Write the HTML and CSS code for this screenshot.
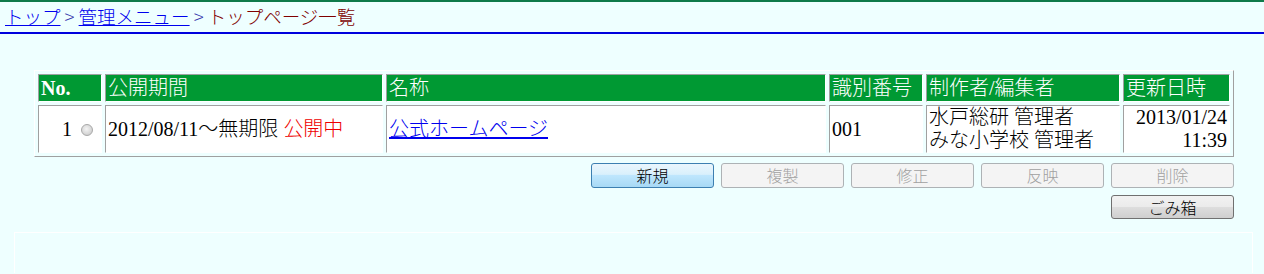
FILE: index.html
```html
<!DOCTYPE html>
<html lang="ja">
<head>
  <meta charset="utf-8">
  <title>トップページ一覧</title>
  <link rel="stylesheet" href="styles.css">
</head>
<body>

  <div class="topbar"></div>

  <div class="crumbs">
    <a href="#">トップ</a><span class="sep"> &gt; </span><a href="#">管理メニュー</a><span class="sep"> &gt; </span><span class="current">トップページ一覧</span>
  </div>

  <div class="main">
    <table class="list">
      <colgroup>
        <col class="c-no">
        <col class="c-period">
        <col class="c-name">
        <col class="c-code">
        <col class="c-author">
        <col class="c-date">
      </colgroup>
      <tr class="head">
        <th class="no">No.</th>
        <th>公開期間</th>
        <th>名称</th>
        <th>識別番号</th>
        <th>制作者/編集者</th>
        <th>更新日時</th>
      </tr>
      <tr class="row">
        <td class="num">1<span class="radio"></span></td>
        <td>2012/08/11～無期限 <span class="live">公開中</span></td>
        <td><a href="#">公式ホームページ</a></td>
        <td>001</td>
        <td>水戸総研 管理者<br>みな小学校 管理者</td>
        <td class="date">2013/01/24<br>11:39</td>
      </tr>
    </table>

    <div class="buttons">
      <button type="button" class="btn btn-new">新規</button>
      <button type="button" class="btn" disabled>複製</button>
      <button type="button" class="btn" disabled>修正</button>
      <button type="button" class="btn" disabled>反映</button>
      <button type="button" class="btn" disabled>削除</button>
    </div>
    <div class="buttons">
      <button type="button" class="btn btn-trash">ごみ箱</button>
    </div>
  </div>

  <div class="panel"></div>

</body>
</html>
```

FILE: styles.css
```css
body {
  margin: 0;
  background: #eeffff;
  font-family: "Liberation Serif", "Noto Sans CJK JP", serif;
  font-size: 20px;
  font-weight: 300;
}

.topbar {
  height: 2px;
  background: #0e7a4a;
}

.crumbs {
  height: 30px;
  padding-left: 5px;
  border-bottom: 2px solid #0000dd;
  font-family: "Noto Sans CJK JP", sans-serif;
  font-size: 18.5px;
  line-height: 28px;
  white-space: nowrap;
}

.crumbs a {
  color: #0000ee;
}

.crumbs .sep {
  color: #3333aa;
}

.crumbs .current {
  color: #800000;
}

.main {
  margin: 36px 30px 0 34px;
}

/* list table */
.list {
  width: 1200px;
  table-layout: fixed;
  border-collapse: separate;
  border-spacing: 3px;
  border-top: 1px solid #ffffff;
  border-left: 1px solid #ffffff;
  border-bottom: 1px solid #a0a0a0;
  border-right: 1px solid #a0a0a0;
}

.c-no { width: 64px; }
.c-period { width: 278px; }
.c-name { width: 440px; }
.c-code { width: 94px; }
.c-author { width: 194px; }
.c-date { width: 107px; }

.list th,
.list td {
  padding: 0 2px;
  border-top: 1px solid #a0a0a0;
  border-left: 1px solid #a0a0a0;
  border-bottom: 1px solid #ffffff;
  border-right: 1px solid #ffffff;
  line-height: 23px;
  white-space: nowrap;
  overflow: hidden;
}

.list .head {
  height: 28px;
}

.list th {
  background: #009933;
  color: white;
  font-weight: 300;
  text-align: left;
}

.list th.no {
  font-weight: bold;
}

.list .row {
  height: 47px;
}

.list td {
  background: white;
  vertical-align: middle;
}

.list td.num {
  text-align: right;
  padding-right: 8px;
}

.list td.date {
  text-align: right;
}

.list td a {
  color: #0000ee;
}

.live {
  color: #ee0000;
}

.radio {
  display: inline-block;
  width: 10px;
  height: 10px;
  margin-left: 9px;
  border: 1px solid #a8a8a8;
  border-radius: 50%;
  background: radial-gradient(circle at 45% 40%, #f4f4f4, #c4c4c4);
  vertical-align: 0;
}

/* buttons */
.buttons {
  display: flex;
  justify-content: flex-end;
  gap: 7px;
  margin-top: 6px;
}

.buttons + .buttons {
  margin-top: 7px;
}

.btn {
  width: 123px;
  height: 25px;
  padding: 0;
  border: 1px solid #adb2b5;
  border-radius: 3px;
  background: #f4f4f4;
  color: #a0a0a0;
  font-family: "Noto Sans CJK JP", sans-serif;
  font-size: 16px;
  font-weight: 300;
  line-height: 21px;
}

.btn-new {
  border-color: #3c7fb1;
  color: black;
  background: linear-gradient(#eaf6fd 0%, #d9f0fc 45%, #bee6fd 50%, #a7d9f5 100%);
}

.btn-trash {
  height: 24px;
  border-color: #707070;
  color: black;
  background: linear-gradient(#f2f2f2 0%, #ebebeb 48%, #dddddd 52%, #cfcfcf 100%);
}

.panel {
  height: 40px;
  margin: 13px 11px 0 14px;
  border: 1px solid #ffffff;
  border-bottom: none;
}
```
